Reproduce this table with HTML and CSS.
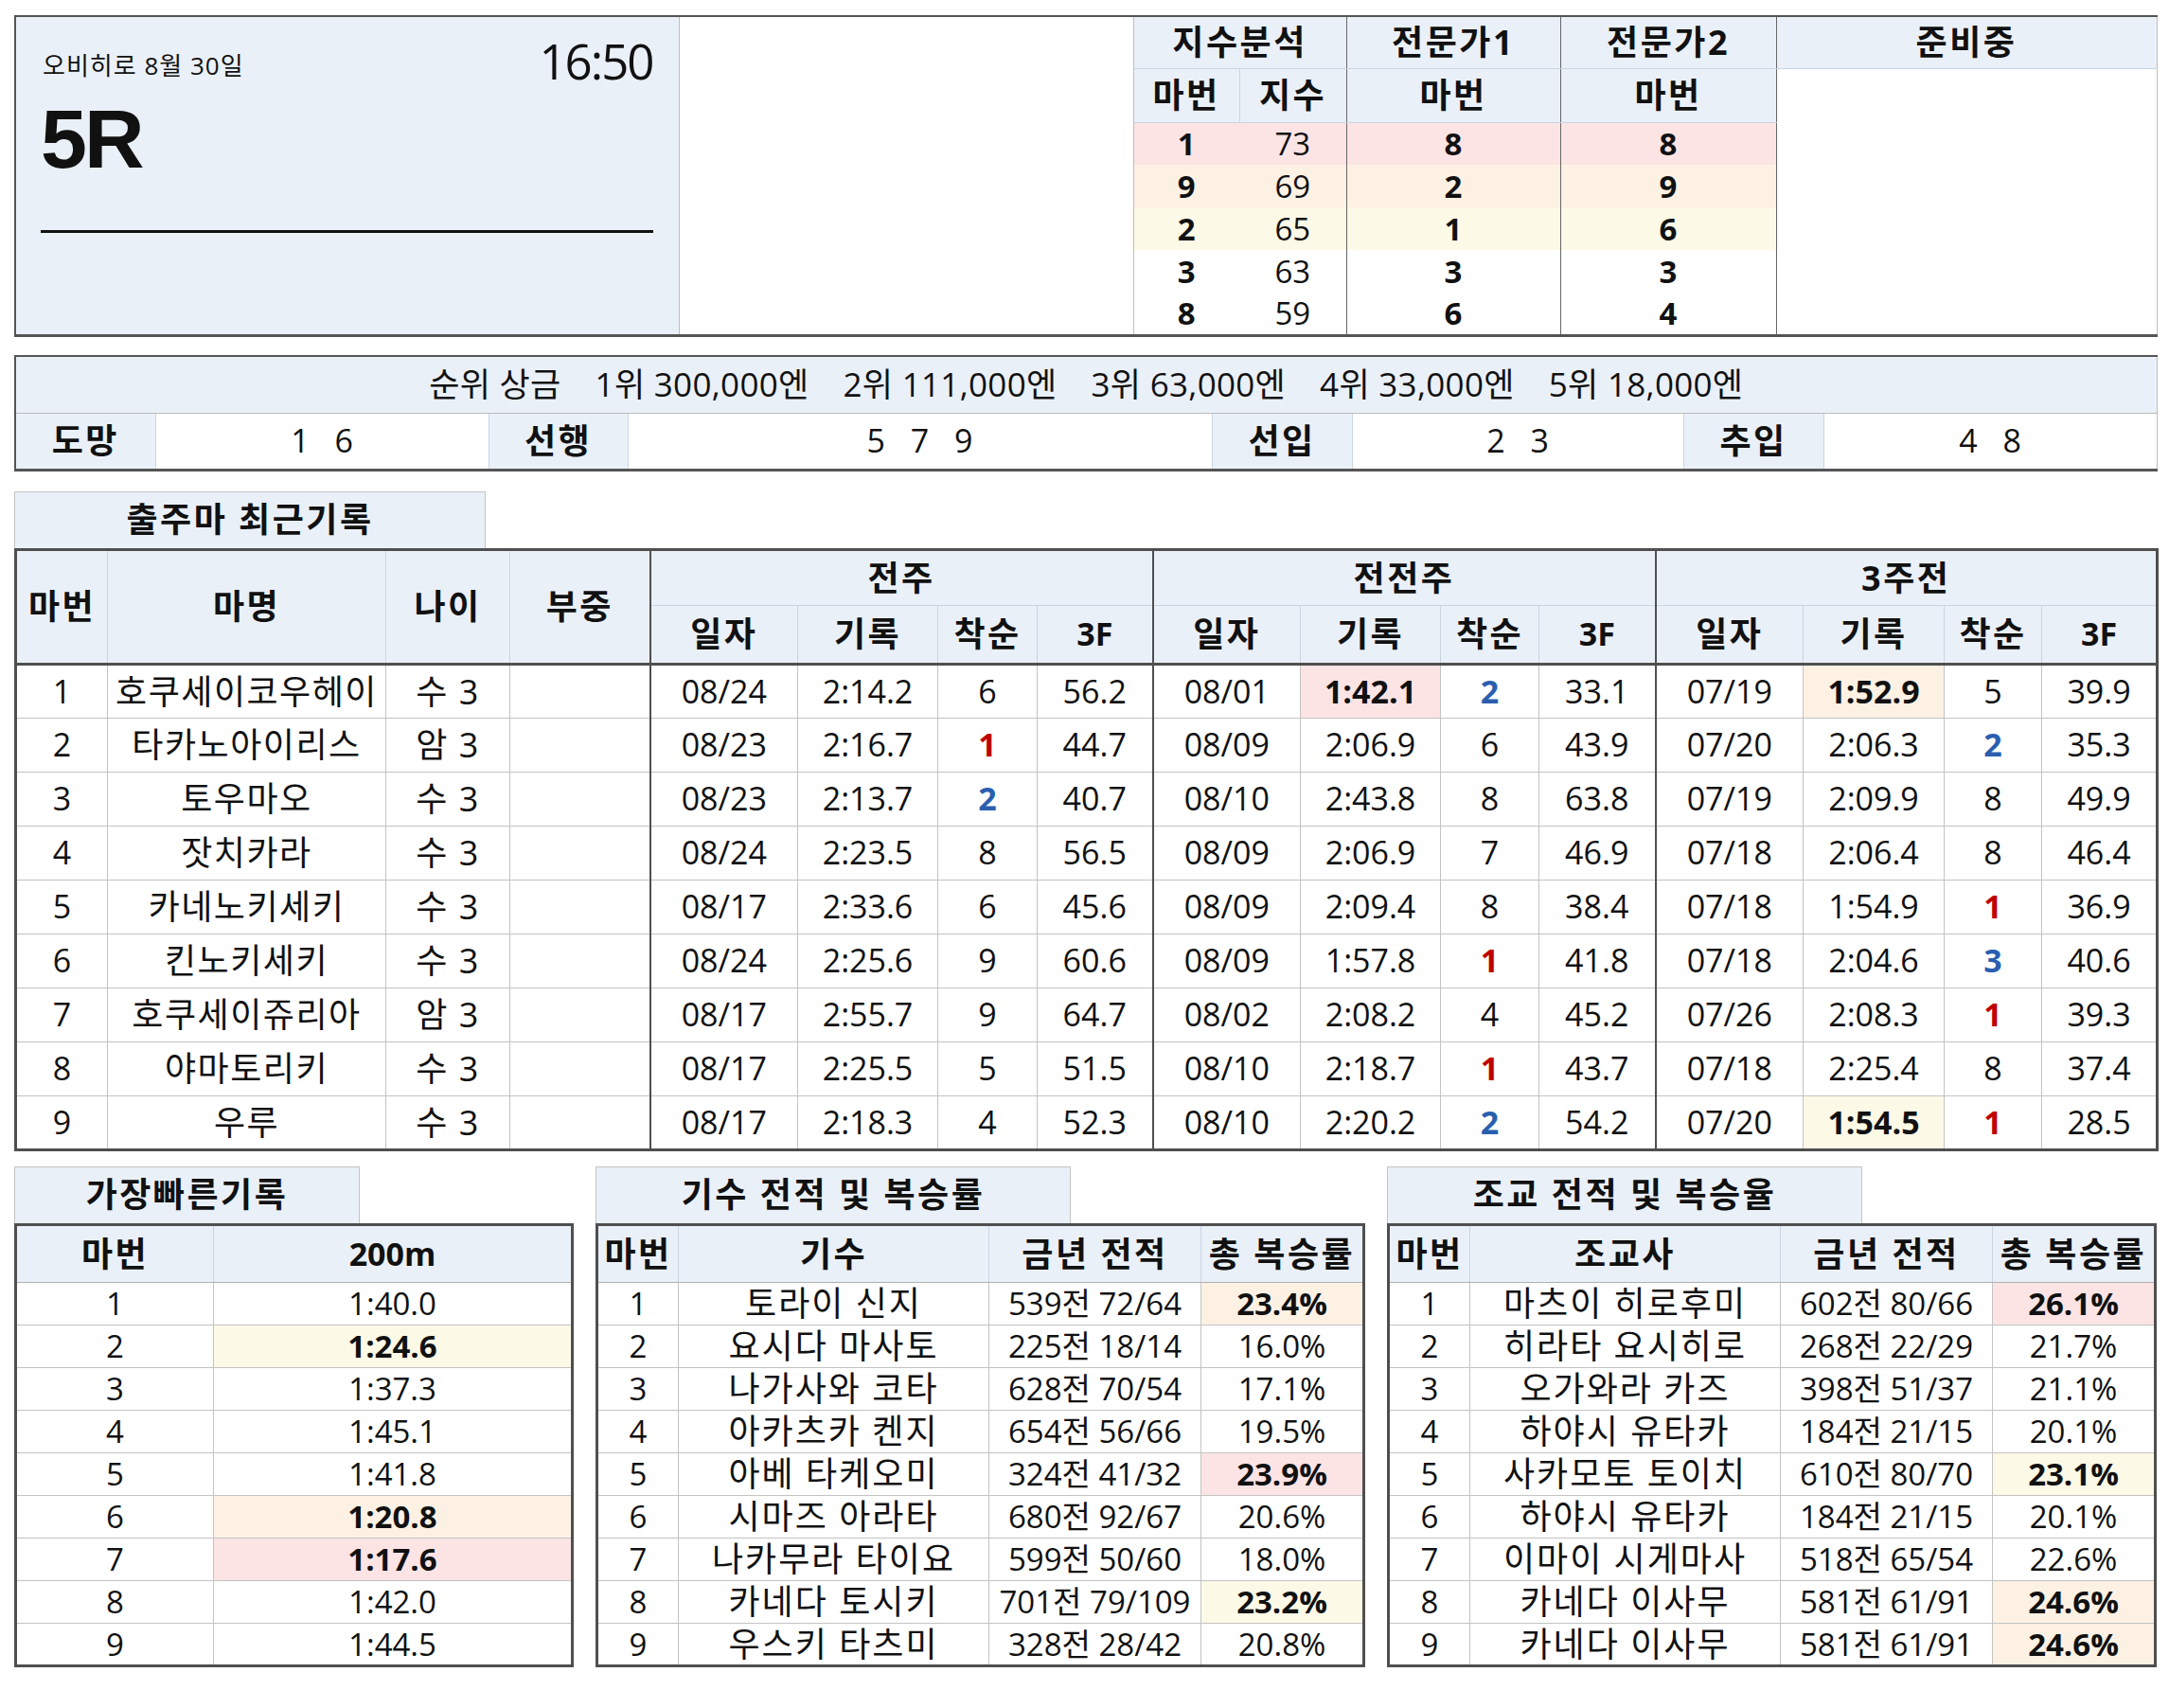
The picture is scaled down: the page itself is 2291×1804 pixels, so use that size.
FILE: index.html
```html
<!DOCTYPE html>
<html lang="ko">
<head>
<meta charset="utf-8">
<title>오비히로 5R</title>
<link rel="stylesheet" href="styles.css">
</head>
<body>
<div class="page">

<table class="top">
  <colgroup>
    <col class="w701"><col class="w480"><col class="w112"><col class="w113"><col class="w226"><col class="w228"><col class="w402">
  </colgroup>
  <tr class="r-h1">
    <td class="info" rowspan="7">
      <div class="race-head">
        <span class="race-date">오비히로 8월 30일</span>
        <span class="race-time">16:50</span>
      </div>
      <div class="race-no">5R</div>
      <div class="race-line"></div>
    </td>
    <td class="blank" rowspan="7"></td>
    <th colspan="2" class="first">지수분석</th>
    <th class="sep">전문가1</th>
    <th class="sep">전문가2</th>
    <th class="sep">준비중</th>
  </tr>
  <tr class="r-h2">
    <th class="first">마번</th><th>지수</th><th class="sep">마번</th><th class="sep">마번</th>
    <td class="empty sep" rowspan="6"></td>
  </tr>
  <tr class="r-d pink"><td class="b first">1</td><td>73</td><td class="b sep">8</td><td class="b sep">8</td></tr>
  <tr class="r-d orange"><td class="b first">9</td><td>69</td><td class="b sep">2</td><td class="b sep">9</td></tr>
  <tr class="r-d yellow"><td class="b first">2</td><td>65</td><td class="b sep">1</td><td class="b sep">6</td></tr>
  <tr class="r-d"><td class="b first">3</td><td>63</td><td class="b sep">3</td><td class="b sep">3</td></tr>
  <tr class="r-d"><td class="b first">8</td><td>59</td><td class="b sep">6</td><td class="b sep">4</td></tr>
</table>

<table class="prize">
  <colgroup>
    <col class="w148"><col class="w352"><col class="w147"><col class="w617"><col class="w148"><col class="w350"><col class="w148"><col class="w352">
  </colgroup>
  <tr class="r-prize">
    <td colspan="8" class="prize-text"><span>순위 상금</span><span>1위 300,000엔</span><span>2위 111,000엔</span><span>3위 63,000엔</span><span>4위 33,000엔</span><span>5위 18,000엔</span></td>
  </tr>
  <tr class="r-style">
    <th>도망</th><td class="nums">1 6</td>
    <th>선행</th><td class="nums">5 7 9</td>
    <th>선입</th><td class="nums">2 3</td>
    <th>추입</th><td class="nums">4 8</td>
  </tr>
</table>

<div class="tab tab-rec">출주마 최근기록</div>
<table class="rec">
  <colgroup>
    <col class="w97"><col class="w294"><col class="w131"><col class="w148">
    <col class="w156"><col class="w148"><col class="w105"><col class="w122">
    <col class="w156"><col class="w148"><col class="w104"><col class="w123">
    <col class="w156"><col class="w149"><col class="w103"><col class="w122">
  </colgroup>
  <thead>
    <tr class="r-h1">
      <th rowspan="2" class="hb">마번</th>
      <th rowspan="2" class="hb">마명</th>
      <th rowspan="2" class="hb">나이</th>
      <th rowspan="2" class="hb">부중</th>
      <th colspan="4" class="g">전주</th>
      <th colspan="4" class="g">전전주</th>
      <th colspan="4" class="g">3주전</th>
    </tr>
    <tr class="r-h2">
      <th class="g hb">일자</th><th class="hb">기록</th><th class="hb">착순</th><th class="hb lat">3F</th>
      <th class="g hb">일자</th><th class="hb">기록</th><th class="hb">착순</th><th class="hb lat">3F</th>
      <th class="g hb">일자</th><th class="hb">기록</th><th class="hb">착순</th><th class="hb lat">3F</th>
    </tr>
  </thead>
  <tbody>
    <tr><td>1</td><td class="kr">호쿠세이코우헤이</td><td class="kr">수 3</td><td></td>
      <td class="g">08/24</td><td>2:14.2</td><td>6</td><td>56.2</td>
      <td class="g">08/01</td><td class="b pink">1:42.1</td><td class="b blue">2</td><td>33.1</td>
      <td class="g">07/19</td><td class="b orange">1:52.9</td><td>5</td><td>39.9</td></tr>
    <tr><td>2</td><td class="kr">타카노아이리스</td><td class="kr">암 3</td><td></td>
      <td class="g">08/23</td><td>2:16.7</td><td class="b red">1</td><td>44.7</td>
      <td class="g">08/09</td><td>2:06.9</td><td>6</td><td>43.9</td>
      <td class="g">07/20</td><td>2:06.3</td><td class="b blue">2</td><td>35.3</td></tr>
    <tr><td>3</td><td class="kr">토우마오</td><td class="kr">수 3</td><td></td>
      <td class="g">08/23</td><td>2:13.7</td><td class="b blue">2</td><td>40.7</td>
      <td class="g">08/10</td><td>2:43.8</td><td>8</td><td>63.8</td>
      <td class="g">07/19</td><td>2:09.9</td><td>8</td><td>49.9</td></tr>
    <tr><td>4</td><td class="kr">잣치카라</td><td class="kr">수 3</td><td></td>
      <td class="g">08/24</td><td>2:23.5</td><td>8</td><td>56.5</td>
      <td class="g">08/09</td><td>2:06.9</td><td>7</td><td>46.9</td>
      <td class="g">07/18</td><td>2:06.4</td><td>8</td><td>46.4</td></tr>
    <tr><td>5</td><td class="kr">카네노키세키</td><td class="kr">수 3</td><td></td>
      <td class="g">08/17</td><td>2:33.6</td><td>6</td><td>45.6</td>
      <td class="g">08/09</td><td>2:09.4</td><td>8</td><td>38.4</td>
      <td class="g">07/18</td><td>1:54.9</td><td class="b red">1</td><td>36.9</td></tr>
    <tr><td>6</td><td class="kr">킨노키세키</td><td class="kr">수 3</td><td></td>
      <td class="g">08/24</td><td>2:25.6</td><td>9</td><td>60.6</td>
      <td class="g">08/09</td><td>1:57.8</td><td class="b red">1</td><td>41.8</td>
      <td class="g">07/18</td><td>2:04.6</td><td class="b blue">3</td><td>40.6</td></tr>
    <tr><td>7</td><td class="kr">호쿠세이쥬리아</td><td class="kr">암 3</td><td></td>
      <td class="g">08/17</td><td>2:55.7</td><td>9</td><td>64.7</td>
      <td class="g">08/02</td><td>2:08.2</td><td>4</td><td>45.2</td>
      <td class="g">07/26</td><td>2:08.3</td><td class="b red">1</td><td>39.3</td></tr>
    <tr><td>8</td><td class="kr">야마토리키</td><td class="kr">수 3</td><td></td>
      <td class="g">08/17</td><td>2:25.5</td><td>5</td><td>51.5</td>
      <td class="g">08/10</td><td>2:18.7</td><td class="b red">1</td><td>43.7</td>
      <td class="g">07/18</td><td>2:25.4</td><td>8</td><td>37.4</td></tr>
    <tr><td>9</td><td class="kr">우루</td><td class="kr">수 3</td><td></td>
      <td class="g">08/17</td><td>2:18.3</td><td>4</td><td>52.3</td>
      <td class="g">08/10</td><td>2:20.2</td><td class="b blue">2</td><td>54.2</td>
      <td class="g">07/20</td><td class="b yellow">1:54.5</td><td class="b red">1</td><td>28.5</td></tr>
  </tbody>
</table>

<div class="bottom">
  <div class="block block-fast">
    <div class="tab tab-fast">가장빠른기록</div>
    <table class="small">
      <colgroup><col class="w209"><col class="w379"></colgroup>
      <tr class="r-sh"><th>마번</th><th class="lat">200m</th></tr>
      <tr><td>1</td><td>1:40.0</td></tr>
      <tr><td>2</td><td class="b yellow">1:24.6</td></tr>
      <tr><td>3</td><td>1:37.3</td></tr>
      <tr><td>4</td><td>1:45.1</td></tr>
      <tr><td>5</td><td>1:41.8</td></tr>
      <tr><td>6</td><td class="b orange">1:20.8</td></tr>
      <tr><td>7</td><td class="b pink">1:17.6</td></tr>
      <tr><td>8</td><td>1:42.0</td></tr>
      <tr><td>9</td><td>1:44.5</td></tr>
    </table>
  </div>

  <div class="block block-jockey">
    <div class="tab tab-stat">기수 전적 및 복승률</div>
    <table class="small">
      <colgroup><col class="w86"><col class="w328"><col class="w224"><col class="w172"></colgroup>
      <tr class="r-sh"><th>마번</th><th>기수</th><th>금년 전적</th><th>총 복승률</th></tr>
      <tr><td>1</td><td class="kr">토라이 신지</td><td>539전 72/64</td><td class="b orange">23.4%</td></tr>
      <tr><td>2</td><td class="kr">요시다 마사토</td><td>225전 18/14</td><td>16.0%</td></tr>
      <tr><td>3</td><td class="kr">나가사와 코타</td><td>628전 70/54</td><td>17.1%</td></tr>
      <tr><td>4</td><td class="kr">아카츠카 켄지</td><td>654전 56/66</td><td>19.5%</td></tr>
      <tr><td>5</td><td class="kr">아베 타케오미</td><td>324전 41/32</td><td class="b pink">23.9%</td></tr>
      <tr><td>6</td><td class="kr">시마즈 아라타</td><td>680전 92/67</td><td>20.6%</td></tr>
      <tr><td>7</td><td class="kr">나카무라 타이요</td><td>599전 50/60</td><td>18.0%</td></tr>
      <tr><td>8</td><td class="kr">카네다 토시키</td><td>701전 79/109</td><td class="b yellow">23.2%</td></tr>
      <tr><td>9</td><td class="kr">우스키 타츠미</td><td>328전 28/42</td><td>20.8%</td></tr>
    </table>
  </div>

  <div class="block block-trainer">
    <div class="tab tab-stat">조교 전적 및 복승율</div>
    <table class="small">
      <colgroup><col class="w86"><col class="w328"><col class="w224"><col class="w172"></colgroup>
      <tr class="r-sh"><th>마번</th><th>조교사</th><th>금년 전적</th><th>총 복승률</th></tr>
      <tr><td>1</td><td class="kr">마츠이 히로후미</td><td>602전 80/66</td><td class="b pink">26.1%</td></tr>
      <tr><td>2</td><td class="kr">히라타 요시히로</td><td>268전 22/29</td><td>21.7%</td></tr>
      <tr><td>3</td><td class="kr">오가와라 카즈</td><td>398전 51/37</td><td>21.1%</td></tr>
      <tr><td>4</td><td class="kr">하야시 유타카</td><td>184전 21/15</td><td>20.1%</td></tr>
      <tr><td>5</td><td class="kr">사카모토 토이치</td><td>610전 80/70</td><td class="b yellow">23.1%</td></tr>
      <tr><td>6</td><td class="kr">하야시 유타카</td><td>184전 21/15</td><td>20.1%</td></tr>
      <tr><td>7</td><td class="kr">이마이 시게마사</td><td>518전 65/54</td><td>22.6%</td></tr>
      <tr><td>8</td><td class="kr">카네다 이사무</td><td>581전 61/91</td><td class="b orange">24.6%</td></tr>
      <tr><td>9</td><td class="kr">카네다 이사무</td><td>581전 61/91</td><td class="b orange">24.6%</td></tr>
    </table>
  </div>
</div>

</div>
</body>
</html>
```

FILE: styles.css
```css
* { box-sizing: border-box; }

body {
  margin: 0;
  background: #ffffff;
  color: #111111;
  font-family: "Open Sans", "Noto Sans CJK KR", sans-serif;
}

.page {
  width: 2291px;
  padding: 16px 0 0 15px;
  display: flex;
  flex-direction: column;
  align-items: flex-start;
}

table {
  border-collapse: collapse;
  table-layout: fixed;
}

td, th {
  padding: 0;
  text-align: center;
  vertical-align: middle;
  font-size: 34px;
  line-height: 1.15;
  white-space: nowrap;
  font-weight: 400;
}

th {
  font-weight: 700;
  font-size: 36px;
  letter-spacing: 2.5px;
  background: #eaf0f8;
}
th.lat { font-size: 34px; letter-spacing: 0; }

.kr { font-size: 36px; letter-spacing: 1.5px; }

.b { font-weight: 700; }
.pink { background: #fce4e5; }
.orange { background: #fdf1e4; }
.yellow { background: #fdf9e7; }
.red { color: #c00000; }
.blue { color: #2a5fb0; }

/* column widths */
.w86 { width: 86px; } .w97 { width: 97px; } .w103 { width: 103px; } .w104 { width: 104px; }
.w105 { width: 105px; } .w112 { width: 112px; } .w113 { width: 113px; } .w122 { width: 122px; }
.w123 { width: 123px; } .w131 { width: 131px; } .w147 { width: 147px; } .w148 { width: 148px; }
.w149 { width: 149px; } .w156 { width: 156px; } .w172 { width: 172px; } .w209 { width: 209px; }
.w224 { width: 224px; } .w226 { width: 226px; } .w228 { width: 228px; } .w294 { width: 294px; }
.w328 { width: 328px; } .w350 { width: 350px; } .w352 { width: 352px; } .w379 { width: 379px; }
.w402 { width: 402px; } .w480 { width: 480px; } .w617 { width: 617px; } .w701 { width: 701px; }

/* ---------- top block ---------- */
.top {
  width: 2262px;
  border-top: 2px solid #555;
  border-bottom: 3px solid #555;
  border-left: 2px solid #555;
  border-right: 1px solid #bdbdbd;
}
.top .r-h1 { height: 55px; }
.top .r-h2 { height: 57px; }
.top .r-d { height: 45px; }
.top .r-d td { font-size: 33px; }
.top th { border-bottom: 1px solid #c9d5e4; }
.top th + th { border-left: 1px solid #c9d5e4; }
.top .sep { border-left: 1px solid #666 !important; }
.top .first { border-left: 1px solid #bdbdbd; }
.top .empty { background: #fff; }

.info {
  background: #eaf0f8;
  vertical-align: top;
  text-align: left;
  padding: 0 27px 0 26px;
  border-right: 1px solid #bdbdbd;
}
.blank { background: #fff; border-right: 1px solid #bdbdbd; }

.race-head {
  display: flex;
  justify-content: space-between;
  align-items: flex-start;
  padding-top: 21px;
  height: 72px;
}
.race-date {
  font-size: 26px;
  line-height: 1;
  letter-spacing: 1px;
  margin-top: 17px;
  padding-left: 2px;
}
.race-time {
  font-size: 51px;
  line-height: 1;
  letter-spacing: -2px;
}
.race-no {
  font-family: "Liberation Sans", "Open Sans", sans-serif;
  font-size: 88px;
  font-weight: 700;
  line-height: 1;
  margin-top: 13px;
  letter-spacing: -3px;
}
.race-line {
  margin-top: 52px;
  border-top: 3px solid #111;
}

/* ---------- prize block ---------- */
.prize {
  width: 2262px;
  margin-top: 19px;
  border-top: 2px solid #555;
  border-bottom: 3px solid #555;
  border-left: 2px solid #555;
  border-right: 1px solid #bdbdbd;
}
.r-prize { height: 61px; }
.r-style { height: 60px; }
.prize-text {
  background: #eaf0f8;
  border-bottom: 1px solid #bdbdbd;
  font-size: 35px;
  letter-spacing: 0.3px;
}
.prize-text span + span { margin-left: 36px; }
.r-style th { border: 1px solid #c9d5e4; border-top-color: #bdbdbd; }
.r-style td { background: #fff; }
.nums { word-spacing: 18px; }

/* ---------- tabs ---------- */
.tab {
  height: 60px;
  background: #eaf0f8;
  border: 1px solid #c4c4c4;
  border-bottom: none;
  font-weight: 700;
  font-size: 36px;
  letter-spacing: 2.5px;
  line-height: 58px;
  text-align: center;
}
.tab-rec { width: 498px; margin-top: 21px; }
.tab-fast { width: 365px; }
.tab-stat { width: 502px; }

/* ---------- record table ---------- */
.rec {
  width: 2262px;
  border: 3px solid #4f4f4f;
}
.rec .r-h1 { height: 59px; }
.rec .r-h2 { height: 62px; }
.rec tbody tr { height: 57px; }
.rec th { border: 1px solid #c9d5e4; }
.rec .hb { border-bottom: 3px solid #4f4f4f; }
.rec td { border: 1px solid #c3c3c3; }
.rec .g { border-left: 2px solid #4f4f4f; }

/* ---------- bottom tables ---------- */
.bottom {
  display: flex;
  gap: 23px;
  margin-top: 16px;
  align-items: flex-start;
}
.block { display: flex; flex-direction: column; align-items: flex-start; }
.small { border: 3px solid #4f4f4f; }
.block-fast .small { width: 588px; }
.block-jockey .small, .block-trainer .small { width: 810px; }
.small .r-sh { height: 61px; }
.small tr { height: 45px; }
.small td { font-size: 33px; }
.small td.kr { font-size: 36px; letter-spacing: 2px; }
.small th { border: 1px solid #c9d5e4; border-bottom: 1px solid #b0b0b0; }
.small td { border: 1px solid #c3c3c3; }
```
